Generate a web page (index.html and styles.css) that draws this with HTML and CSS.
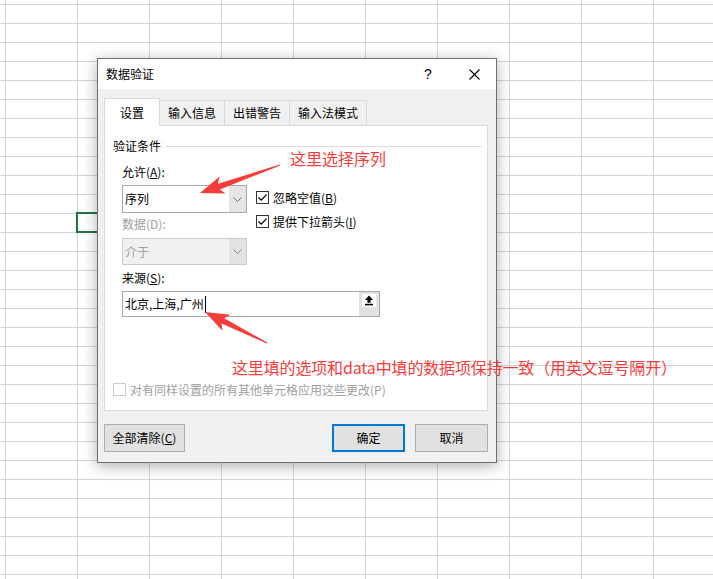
FILE: index.html
```html
<!DOCTYPE html>
<html lang="zh-CN">
<head>
<meta charset="utf-8">
<title>数据验证</title>
<link rel="stylesheet" href="styles.css">
</head>
<body>
<div class="cell-sel"></div>

<div class="dialog">
  <div class="titlebar">
    <span class="title">数据验证</span>
    <span class="help">?</span>
    <span class="close"><svg width="11" height="11" viewBox="0 0 11 11"><path d="M0.5 0.5 L10.5 10.5 M10.5 0.5 L0.5 10.5" stroke="#000" stroke-width="1.1" fill="none"/></svg></span>
  </div>
  <div class="dbody">
    <div class="tabs">
      <div class="tab tab-active">设置</div>
      <div class="tab tab-w66">输入信息</div>
      <div class="tab tab-w66">出错警告</div>
      <div class="tab tab-w78">输入法模式</div>
    </div>
    <div class="panel">
      <div class="group-head"><span>验证条件</span><span class="rule"></span></div>
      <div class="criteria">
        <div class="row-top">
          <div class="col-left">
            <div class="lbl">允许(<u>A</u>):</div>
            <div class="select">
              <span class="sel-text">序列</span>
              <span class="sel-btn"><svg width="9" height="5" viewBox="0 0 9 5"><path d="M0.5 0.5 L4.5 4.5 L8.5 0.5" stroke="#707070" stroke-width="1" fill="none"/></svg></span>
            </div>
          </div>
          <div class="col-right">
            <div class="check-row">
              <span class="cb"><svg width="11" height="11" viewBox="0 0 11 11"><path d="M1.5 5.5 L4.2 8.2 L9.6 2.6" stroke="#000" stroke-width="1.2" fill="none"/></svg></span>
              <span>忽略空值(<u>B</u>)</span>
            </div>
            <div class="check-row">
              <span class="cb"><svg width="11" height="11" viewBox="0 0 11 11"><path d="M1.5 5.5 L4.2 8.2 L9.6 2.6" stroke="#000" stroke-width="1.2" fill="none"/></svg></span>
              <span>提供下拉箭头(<u>I</u>)</span>
            </div>
          </div>
        </div>
        <div class="lbl lbl-dis lbl-data">数据(D):</div>
        <div class="select select-dis">
          <span class="sel-text">介于</span>
          <span class="sel-btn"><svg width="9" height="5" viewBox="0 0 9 5"><path d="M0.5 0.5 L4.5 4.5 L8.5 0.5" stroke="#8a8a8a" stroke-width="1" fill="none"/></svg></span>
        </div>
        <div class="lbl lbl-src">来源(<u>S</u>):</div>
        <div class="source">
          <span class="src-text">北京,上海,广州<span class="caret"></span></span>
          <span class="src-btn"><svg width="14" height="13" viewBox="0 0 14 13"><rect x="0" y="0" width="14" height="13" fill="#fff"/><path d="M7 1.6 L3 6 L5.4 6 L5.4 8.8 L8.6 8.8 L8.6 6 L11 6 Z" fill="#000"/><rect x="3" y="9.8" width="8" height="1.6" fill="#000"/></svg></span>
        </div>
      </div>
      <div class="apply-row">
        <span class="cb cb-dis"></span>
        <span>对有同样设置的所有其他单元格应用这些更改(P)</span>
      </div>
    </div>
    <div class="buttons">
      <div class="btn btn-clear">全部清除(<u>C</u>)</div>
      <div class="btn btn-ok">确定</div>
      <div class="btn btn-cancel">取消</div>
    </div>
  </div>
</div>

<svg class="arrows" width="713" height="579" viewBox="0 0 713 579">
  <polygon fill="#f53c3c" points="280.2,165.5 219.9,189.4 225.6,193.6 200,193 219.6,176.6 217.9,183.8 279.8,164.5"/>
  <polygon fill="#f53c3c" points="267.2,342.6 224.2,318.2 230.5,314.7 205,312 222.5,330.7 221.6,323.6 266.8,343.4"/>
</svg>
<div class="note note-1">这里选择序列</div>
<div class="note note-2">这里填的选项和data中填的数据项保持一致（用英文逗号隔开）</div>
</body>
</html>
```

FILE: styles.css
```css
html, body {
  margin: 0;
  padding: 0;
}

body {
  width: 713px;
  height: 579px;
  overflow: hidden;
  position: relative;
  background-color: #ffffff;
  background-image:
    linear-gradient(to right, #d4d4d4 1px, transparent 1px),
    linear-gradient(to bottom, #d4d4d4 1px, transparent 1px);
  background-size: 72px 19px;
  background-position: 5px 4px;
  font-family: "Noto Sans CJK SC", "Noto Sans", sans-serif;
  font-size: 12px;
  color: #000;
}

.cell-sel {
  position: absolute;
  left: 76px;
  top: 212px;
  width: 74px;
  height: 21px;
  box-sizing: border-box;
  border: 2px solid #217346;
}

.dialog {
  position: absolute;
  left: 97px;
  top: 58px;
  width: 400px;
  height: 405px;
  box-sizing: border-box;
  border: 1px solid #707070;
  box-shadow: 0 3px 14px rgba(0, 0, 0, 0.32);
  display: flex;
  flex-direction: column;
  background: #f0f0f0;
}

.titlebar {
  height: 30px;
  background: #ffffff;
  display: flex;
  align-items: center;
  padding-left: 8px;
  line-height: 16px;
}

.title {
  font-size: 12px;
}

.help {
  margin-left: auto;
  width: 30px;
  text-align: center;
  font-size: 14px;
  font-family: "Liberation Sans", sans-serif;
  margin-right: 9px;
}

.close {
  width: 44px;
  height: 30px;
  display: flex;
  align-items: center;
  justify-content: center;
}

.dbody {
  flex: 1;
  display: flex;
  flex-direction: column;
  padding: 9px 8px 0 6px;
}

.tabs {
  display: flex;
  align-items: flex-end;
  height: 27px;
}

.tab {
  box-sizing: border-box;
  height: 25px;
  border: 1px solid #d9d9d9;
  border-bottom: none;
  margin-left: -1px;
  display: flex;
  align-items: center;
  justify-content: center;
  line-height: 16px;
  background: #f0f0f0;
}

.tab-active {
  width: 56px;
  height: 28px;
  margin-left: 0;
  margin-bottom: -1px;
  background: #ffffff;
  position: relative;
  z-index: 1;
}

.tab-w66 { width: 66px; }
.tab-w78 { width: 78px; }

.panel {
  height: 286px;
  box-sizing: border-box;
  background: #ffffff;
  border: 1px solid #d9d9d9;
}

.group-head {
  margin-top: 12px;
  height: 16px;
  line-height: 16px;
  display: flex;
  align-items: center;
  padding: 0 5px 0 8px;
}

.rule {
  flex: 1;
  height: 1px;
  background: #dcdcdc;
  margin-left: 5px;
}

.criteria {
  padding-left: 17px;
  margin-top: 10px;
}

.row-top {
  display: flex;
  gap: 9px;
  height: 49px;
}

.col-left {
  width: 125px;
}

.col-right {
  padding-top: 27px;
  display: flex;
  flex-direction: column;
  gap: 11px;
}

.lbl {
  height: 16px;
  line-height: 16px;
}

.lbl-dis {
  color: #a0a0a0;
}

.lbl-data { margin-top: 3px; }
.lbl-src { margin-top: 5px; }

.select {
  margin-top: 5px;
  width: 125px;
  height: 28px;
  box-sizing: border-box;
  border: 1px solid #a8a8a8;
  background: #ffffff;
  display: flex;
}

.sel-text {
  flex: 1;
  padding-left: 2px;
  line-height: 26px;
}

.sel-btn {
  width: 17px;
  background: #e5e5e5;
  display: flex;
  align-items: center;
  justify-content: center;
}

.select-dis {
  margin-top: 6px;
  height: 27px;
  border-color: #cccccc;
  background: #f0f0f0;
  color: #a0a0a0;
}

.select-dis .sel-text {
  line-height: 25px;
}

.select-dis .sel-btn {
  background: #e3e3e3;
}

.check-row {
  display: flex;
  align-items: center;
  gap: 4px;
  height: 13px;
  line-height: 16px;
  white-space: nowrap;
}

.cb {
  width: 13px;
  height: 13px;
  box-sizing: border-box;
  border: 1px solid #333333;
  background: #ffffff;
  display: flex;
  align-items: center;
  justify-content: center;
  flex: none;
}

.cb-dis {
  border-color: #cccccc;
}

.source {
  margin-top: 5px;
  width: 258px;
  height: 26px;
  box-sizing: border-box;
  border: 1px solid #a8a8a8;
  background: #ffffff;
  display: flex;
}

.src-text {
  flex: 1;
  padding-left: 2px;
  line-height: 24px;
  display: flex;
  align-items: center;
}

.caret {
  display: inline-block;
  width: 1px;
  height: 17px;
  background: #000;
  margin-left: 1px;
}

.src-btn {
  width: 20px;
  background: #e1e1e1;
  display: flex;
  align-items: flex-start;
  justify-content: center;
  padding-top: 2px;
  box-sizing: border-box;
}

.apply-row {
  margin-top: 66px;
  padding-left: 8px;
  display: flex;
  align-items: center;
  gap: 4px;
  height: 13px;
  line-height: 16px;
  color: #a0a0a0;
}

.buttons {
  margin-top: 13px;
  display: flex;
}

.btn {
  height: 28px;
  box-sizing: border-box;
  background: #e1e1e1;
  border: 1px solid #adadad;
  display: flex;
  align-items: center;
  justify-content: center;
  line-height: 16px;
}

.btn-clear { width: 81px; }

.btn-ok {
  width: 73px;
  margin-left: auto;
  border: 2px solid #0078d7;
}

.btn-cancel {
  width: 73px;
  margin-left: 10px;
}

.arrows {
  position: absolute;
  left: 0;
  top: 0;
  pointer-events: none;
}

.note {
  position: absolute;
  font-size: 16px;
  line-height: 20px;
  color: #f53c3c;
  white-space: nowrap;
}

.note-1 {
  left: 290px;
  top: 148px;
}

.note-2 {
  left: 232px;
  top: 357px;
  letter-spacing: -0.15px;
}
```
